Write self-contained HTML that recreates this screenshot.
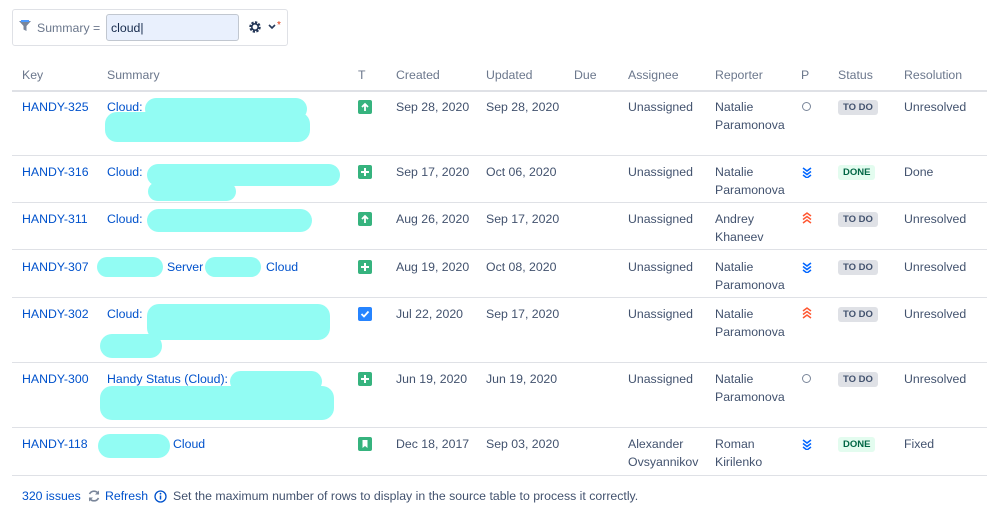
<!DOCTYPE html><html><head><style>
body{margin:0;width:999px;height:518px;background:#fff;font-family:"Liberation Sans",sans-serif;font-size:12.3px;color:#42526e;position:relative;overflow:hidden}
.a{position:absolute;white-space:nowrap;line-height:18px}
.l{color:#0052cc}.h{color:#6b778c}
.hr{position:absolute;left:12px;width:975px;height:1px;background:#dfe1e6}
.b{position:absolute;background:#92fcf3;border-radius:12px}
.ic{position:absolute;left:358px;width:14px;height:14px;border-radius:2px;background:#36b37e}
.ic svg,.p svg{display:block}
.st{position:absolute;left:838px;font-size:9.5px;font-weight:bold;padding:0 5px;height:15px;line-height:15px;border-radius:3px;background:#dfe1e6;color:#42526e}
.dn{background:#e3fcef;color:#006644}
.o{position:absolute;left:802px;width:7px;height:7px;border:1.5px solid #7a869a;border-radius:50%}
.p{position:absolute;left:801px;width:12px;height:12px}
</style></head><body>
<div style="position:absolute;left:12px;top:9px;width:274px;height:35px;border:1px solid #dfe1e6;border-radius:3px"></div>
<svg style="position:absolute;left:18px;top:19px" width="14" height="14" viewBox="0 0 14 14"><path d="M1 2h12l-4.5 5v5l-3-1.5V7z" fill="#7a869a"/><rect x="3" y="1" width="8" height="2" fill="#4c9aff"/></svg>
<div class="a h" style="left:37px;top:19px">Summary =</div>
<div style="position:absolute;left:106px;top:14px;width:131px;height:25px;background:#e9f0fd;border:1px solid #c1c7d0;border-radius:3px"></div>
<div class="a" style="left:111px;top:19px;color:#172b4d">cloud|</div>
<svg style="position:absolute;left:248px;top:20px" width="14" height="14" viewBox="0 0 14 14"><circle cx="7" cy="7" r="4.5" fill="none" stroke="#253858" stroke-width="2.5" stroke-dasharray="2.2 1.3"/><circle cx="7" cy="7" r="3.2" fill="none" stroke="#253858" stroke-width="1.6"/></svg>
<svg style="position:absolute;left:268px;top:24px" width="8" height="6" viewBox="0 0 8 6"><path d="M1 1l3 3 3-3" fill="none" stroke="#253858" stroke-width="1.6"/></svg>
<div class="a" style="left:277px;top:17px;font-size:10px;color:#de350b">*</div>
<div class="a h" style="left:22px;top:66px">Key</div><div class="a h" style="left:107px;top:66px">Summary</div><div class="a h" style="left:358px;top:66px">T</div><div class="a h" style="left:396px;top:66px">Created</div><div class="a h" style="left:486px;top:66px">Updated</div><div class="a h" style="left:574px;top:66px">Due</div><div class="a h" style="left:628px;top:66px">Assignee</div><div class="a h" style="left:715px;top:66px">Reporter</div><div class="a h" style="left:801px;top:66px">P</div><div class="a h" style="left:838px;top:66px">Status</div><div class="a h" style="left:904px;top:66px">Resolution</div>
<div class="hr" style="top:90px;height:2px"></div>
<div class="hr" style="top:155px"></div><div class="hr" style="top:202px"></div><div class="hr" style="top:249px"></div><div class="hr" style="top:297px"></div><div class="hr" style="top:362px"></div><div class="hr" style="top:427px"></div><div class="hr" style="top:475px"></div>
<div class="a l" style="left:22px;top:98px">HANDY-325</div><div class="a l" style="left:107px;top:98px">Cloud:</div>
<div class="a l" style="left:22px;top:163px">HANDY-316</div><div class="a l" style="left:107px;top:163px">Cloud:</div>
<div class="a l" style="left:22px;top:210px">HANDY-311</div><div class="a l" style="left:107px;top:210px">Cloud:</div>
<div class="a l" style="left:22px;top:258px">HANDY-307</div><div class="a l" style="left:167px;top:258px">Server</div><div class="a l" style="left:266px;top:258px">Cloud</div>
<div class="a l" style="left:22px;top:305px">HANDY-302</div><div class="a l" style="left:107px;top:305px">Cloud:</div>
<div class="a l" style="left:22px;top:370px">HANDY-300</div>
<div class="a l" style="left:22px;top:435px">HANDY-118</div><div class="a l" style="left:173px;top:435px">Cloud</div>
<div class="b" style="left:145px;top:98px;width:162px;height:22px"></div><div class="b" style="left:105px;top:112px;width:205px;height:30px"></div>
<div class="b" style="left:147px;top:164px;width:193px;height:22px"></div><div class="b" style="left:148px;top:182px;width:88px;height:19px"></div>
<div class="b" style="left:147px;top:209px;width:165px;height:23px"></div>
<div class="b" style="left:97px;top:257px;width:66px;height:20px"></div><div class="b" style="left:205px;top:257px;width:56px;height:20px"></div>
<div class="b" style="left:147px;top:304px;width:183px;height:36px"></div><div class="b" style="left:100px;top:334px;width:62px;height:24px"></div>
<div class="b" style="left:230px;top:371px;width:92px;height:21px"></div><div class="b" style="left:100px;top:386px;width:234px;height:34px"></div>
<div class="a l" style="left:107px;top:370px">Handy Status (Cloud):</div>
<div class="b" style="left:98px;top:434px;width:72px;height:24px"></div>

<div class="ic" style="top:100px"><svg width="14" height="14"><path d="M7 11V4M4 7l3-3 3 3" fill="none" stroke="#fff" stroke-width="1.8"/></svg></div>
<div class="a" style="left:396px;top:98px">Sep 28, 2020</div><div class="a" style="left:486px;top:98px">Sep 28, 2020</div><div class="a" style="left:628px;top:98px">Unassigned</div><div class="a" style="left:715px;top:98px">Natalie<br>Paramonova</div><div class="o" style="top:102px"></div><div class="st" style="top:100px">TO DO</div><div class="a" style="left:904px;top:98px">Unresolved</div>

<div class="ic" style="top:165px"><svg width="14" height="14"><path d="M7 3v8M3 7h8" stroke="#fff" stroke-width="2"/></svg></div>
<div class="a" style="left:396px;top:163px">Sep 17, 2020</div><div class="a" style="left:486px;top:163px">Oct 06, 2020</div><div class="a" style="left:628px;top:163px">Unassigned</div><div class="a" style="left:715px;top:163px">Natalie<br>Paramonova</div>
<div class="p" style="top:166px"><svg width="12" height="12"><path d="M2 2l4 3 4-3M2 5.5l4 3 4-3M2 9l4 3 4-3" fill="none" stroke="#0065ff" stroke-width="1.5"/></svg></div><div class="st dn" style="top:165px">DONE</div><div class="a" style="left:904px;top:163px">Done</div>

<div class="ic" style="top:212px"><svg width="14" height="14"><path d="M7 11V4M4 7l3-3 3 3" fill="none" stroke="#fff" stroke-width="1.8"/></svg></div>
<div class="a" style="left:396px;top:210px">Aug 26, 2020</div><div class="a" style="left:486px;top:210px">Sep 17, 2020</div><div class="a" style="left:628px;top:210px">Unassigned</div><div class="a" style="left:715px;top:210px">Andrey<br>Khaneev</div>
<div class="p" style="top:212px"><svg width="12" height="12"><path d="M2 4l4-3 4 3M2 7.5l4-3 4 3M2 11l4-3 4 3" fill="none" stroke="#ff5630" stroke-width="1.5"/></svg></div><div class="st" style="top:212px">TO DO</div><div class="a" style="left:904px;top:210px">Unresolved</div>

<div class="ic" style="top:260px"><svg width="14" height="14"><path d="M7 3v8M3 7h8" stroke="#fff" stroke-width="2"/></svg></div>
<div class="a" style="left:396px;top:258px">Aug 19, 2020</div><div class="a" style="left:486px;top:258px">Oct 08, 2020</div><div class="a" style="left:628px;top:258px">Unassigned</div><div class="a" style="left:715px;top:258px">Natalie<br>Paramonova</div>
<div class="p" style="top:261px"><svg width="12" height="12"><path d="M2 2l4 3 4-3M2 5.5l4 3 4-3M2 9l4 3 4-3" fill="none" stroke="#0065ff" stroke-width="1.5"/></svg></div><div class="st" style="top:260px">TO DO</div><div class="a" style="left:904px;top:258px">Unresolved</div>

<div class="ic" style="top:307px;background:#2684ff"><svg width="14" height="14"><path d="M3.5 7l2.5 2.5 4.5-5" fill="none" stroke="#fff" stroke-width="1.8"/></svg></div>
<div class="a" style="left:396px;top:305px">Jul 22, 2020</div><div class="a" style="left:486px;top:305px">Sep 17, 2020</div><div class="a" style="left:628px;top:305px">Unassigned</div><div class="a" style="left:715px;top:305px">Natalie<br>Paramonova</div>
<div class="p" style="top:307px"><svg width="12" height="12"><path d="M2 4l4-3 4 3M2 7.5l4-3 4 3M2 11l4-3 4 3" fill="none" stroke="#ff5630" stroke-width="1.5"/></svg></div><div class="st" style="top:307px">TO DO</div><div class="a" style="left:904px;top:305px">Unresolved</div>

<div class="ic" style="top:372px"><svg width="14" height="14"><path d="M7 3v8M3 7h8" stroke="#fff" stroke-width="2"/></svg></div>
<div class="a" style="left:396px;top:370px">Jun 19, 2020</div><div class="a" style="left:486px;top:370px">Jun 19, 2020</div><div class="a" style="left:628px;top:370px">Unassigned</div><div class="a" style="left:715px;top:370px">Natalie<br>Paramonova</div><div class="o" style="top:374px"></div><div class="st" style="top:372px">TO DO</div><div class="a" style="left:904px;top:370px">Unresolved</div>

<div class="ic" style="top:437px"><svg width="14" height="14"><path d="M4.5 3h5v8l-2.5-2-2.5 2z" fill="#fff"/></svg></div>
<div class="a" style="left:396px;top:435px">Dec 18, 2017</div><div class="a" style="left:486px;top:435px">Sep 03, 2020</div><div class="a" style="left:628px;top:435px">Alexander<br>Ovsyannikov</div><div class="a" style="left:715px;top:435px">Roman<br>Kirilenko</div>
<div class="p" style="top:438px"><svg width="12" height="12"><path d="M2 2l4 3 4-3M2 5.5l4 3 4-3M2 9l4 3 4-3" fill="none" stroke="#0065ff" stroke-width="1.5"/></svg></div><div class="st dn" style="top:437px">DONE</div><div class="a" style="left:904px;top:435px">Fixed</div>

<div class="a l" style="left:22px;top:487px">320 issues</div>
<svg style="position:absolute;left:87px;top:489px" width="14" height="14" viewBox="0 0 14 14"><path d="M11.5 5A5 5 0 0 0 2.5 5M2.5 9a5 5 0 0 0 9 0" fill="none" stroke="#7a869a" stroke-width="1.6"/><path d="M12 1.5v4h-4zM2 12.5v-4h4z" fill="#7a869a"/></svg>
<div class="a l" style="left:105px;top:487px">Refresh</div>
<svg style="position:absolute;left:154px;top:490px" width="13" height="13" viewBox="0 0 13 13"><circle cx="6.5" cy="6.5" r="5.5" fill="none" stroke="#0052cc" stroke-width="1.3"/><path d="M6.5 5.5v4" stroke="#0052cc" stroke-width="1.5"/><circle cx="6.5" cy="3.7" r="0.9" fill="#0052cc"/></svg>
<div class="a" style="left:173px;top:487px">Set the maximum number of rows to display in the source table to process it correctly.</div>
</body></html>
